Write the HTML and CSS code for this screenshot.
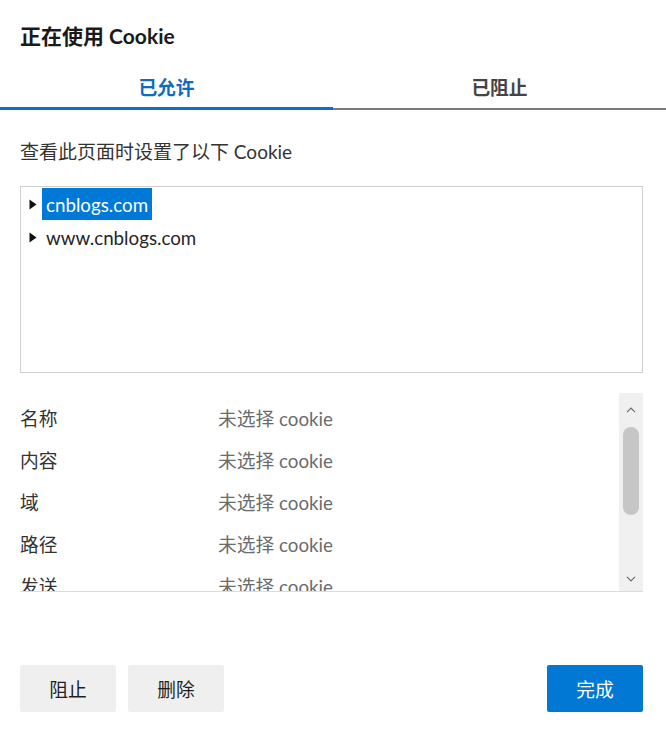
FILE: index.html
```html
<!DOCTYPE html>
<html lang="zh-CN">
<head>
<meta charset="utf-8">
<title>正在使用 Cookie</title>
<link rel="stylesheet" href="styles.css">
</head>
<body>
<div class="dialog">
  <h1 class="title">正在使用 Cookie</h1>
  <div class="tabs">
    <div class="tab tab-active">已允许</div>
    <div class="tab">已阻止</div>
  </div>
  <div class="content">
    <p class="subtitle">查看此页面时设置了以下 Cookie</p>
    <div class="tree">
      <div class="tree-item">
        <svg class="caret" width="8" height="11" viewBox="0 0 8 11"><path d="M0.5 0.5 L7.5 5.5 L0.5 10.5 Z" fill="#111"/></svg>
        <span class="tree-label selected">cnblogs.com</span>
      </div>
      <div class="tree-item">
        <svg class="caret" width="8" height="11" viewBox="0 0 8 11"><path d="M0.5 0.5 L7.5 5.5 L0.5 10.5 Z" fill="#111"/></svg>
        <span class="tree-label">www.cnblogs.com</span>
      </div>
    </div>
    <div class="details">
      <div class="details-list">
        <div class="row"><span class="label">名称</span><span class="value">未选择 cookie</span></div>
        <div class="row"><span class="label">内容</span><span class="value">未选择 cookie</span></div>
        <div class="row"><span class="label">域</span><span class="value">未选择 cookie</span></div>
        <div class="row"><span class="label">路径</span><span class="value">未选择 cookie</span></div>
        <div class="row"><span class="label">发送</span><span class="value">未选择 cookie</span></div>
      </div>
      <div class="scrollbar">
        <div class="sb-up"><svg width="10" height="6" viewBox="0 0 10 6"><path d="M1 5.2 L5 1 L9 5.2" fill="none" stroke="#6a6a6a" stroke-width="1.1"/></svg></div>
        <div class="sb-thumb"></div>
        <div class="sb-fill"></div>
        <div class="sb-down"><svg width="10" height="6" viewBox="0 0 10 6"><path d="M1 0.8 L5 5 L9 0.8" fill="none" stroke="#6a6a6a" stroke-width="1.1"/></svg></div>
      </div>
    </div>
    <div class="actions">
      <button class="btn">阻止</button>
      <button class="btn">删除</button>
      <span class="spacer"></span>
      <button class="btn btn-primary">完成</button>
    </div>
  </div>
</div>
</body>
</html>
```
FILE: styles.css
```css
html, body {
  margin: 0;
  padding: 0;
  background: #ffffff;
}
body {
  font-family: "Lato", "Noto Sans CJK SC", sans-serif;
  font-size: 18.75px;
  color: #1f1f1f;
  width: 666px;
  height: 736px;
  overflow: hidden;
}
.dialog {
  display: flex;
  flex-direction: column;
}
.title {
  margin: 0;
  padding: 21px 20px 0 20px;
  height: 30px;
  line-height: 30px;
  font-size: 21px;
  font-weight: 700;
  color: #1a1a1a;
}
.tabs {
  display: flex;
  margin-top: 13px;
  align-items: stretch;
}
.tab {
  flex: 1;
  box-sizing: border-box;
  height: 46px;
  display: flex;
  align-items: center;
  justify-content: center;
  padding-top: 1px;
  font-weight: 700;
  color: #444444;
  border-bottom: 2px solid #7a7a7a;
}
.tab-active {
  color: #0f6cbd;
  border-bottom: 3px solid #0f6fc6;
}
.content {
  display: flex;
  flex-direction: column;
  padding: 0 23px 0 20px;
}
.subtitle {
  margin: 28px 0 0 0;
  height: 28px;
  line-height: 28px;
  color: #333333;
  font-size: 19px;
}
.tree {
  margin-top: 20px;
  box-sizing: border-box;
  height: 187px;
  border: 1px solid #cfcfcf;
  padding: 1px 0 0 8px;
  display: flex;
  flex-direction: column;
  gap: 1px;
}
.tree-item {
  display: flex;
  align-items: center;
  height: 32px;
}
.caret {
  display: block;
  margin-right: 5px;
}
.tree-label {
  display: flex;
  align-items: center;
  height: 32px;
  padding: 0 4px;
  color: #262626;
}
.tree-label.selected {
  background: #0078d7;
  color: #ffffff;
}
.details {
  margin-top: 20px;
  display: flex;
  box-sizing: border-box;
  height: 199px;
  border-bottom: 1px solid #dcdcdc;
  overflow: hidden;
}
.details-list {
  flex: 1;
  padding-top: 3px;
}
.row {
  display: flex;
  align-items: center;
  height: 42px;
}
.label {
  width: 198px;
  color: #333333;
}
.value {
  color: #6b6b6b;
}
.scrollbar {
  width: 24px;
  background: #f0f0f0;
  display: flex;
  flex-direction: column;
  align-items: center;
}
.sb-up {
  height: 34px;
  display: flex;
  align-items: center;
  justify-content: center;
}
.sb-thumb {
  width: 16px;
  height: 88px;
  border-radius: 8px;
  background: #c6c6c6;
}
.sb-fill {
  flex: 1;
}
.sb-down {
  height: 24px;
  display: flex;
  align-items: center;
  justify-content: center;
}
.actions {
  display: flex;
  gap: 12px;
  margin-top: 73px;
}
.spacer {
  flex: 1;
}
.btn {
  font-family: inherit;
  font-size: 18.75px;
  width: 96px;
  height: 47px;
  border: none;
  border-radius: 2px;
  background: #efefef;
  color: #1f1f1f;
  padding: 0;
}
.btn-primary {
  background: #0078d4;
  color: #ffffff;
}
```
